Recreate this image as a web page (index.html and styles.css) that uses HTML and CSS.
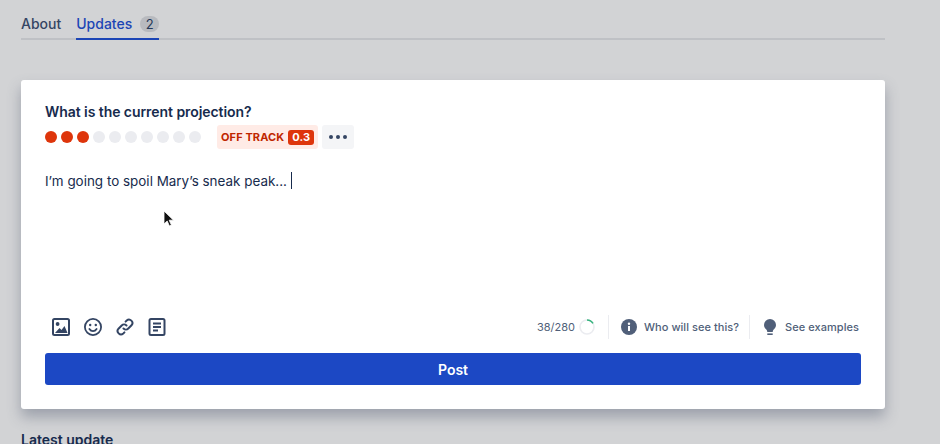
FILE: index.html

```html
<!DOCTYPE html>
<html>
<head>
    <title>Updates</title>
    <link rel="stylesheet" href="styles.css">
</head>
<body>
    <nav class="tabs">
        <a class="tab">About</a>
        <a class="tab active">Updates <span class="count">2</span></a>
    </nav>

    <section class="card">
        <h2 class="question">What is the current projection?</h2>
        <div class="rating">
            <div class="dots">
                <span class="dot on"></span><span class="dot on"></span><span class="dot on"></span>
                <span class="dot"></span><span class="dot"></span><span class="dot"></span>
                <span class="dot"></span><span class="dot"></span><span class="dot"></span><span class="dot"></span>
            </div>
            <div class="status">OFF TRACK <span class="score">0.3</span></div>
            <div class="more"><span></span><span></span><span></span></div>
        </div>

        <p class="editor">I’m going to spoil Mary’s sneak peak... <span class="caret"></span></p>

        <div class="toolbar">
            <div class="tools">
                <svg class="tool" viewBox="0 0 20 20" fill="none" stroke="#344563" stroke-width="2">
                    <rect x="2" y="2" width="16" height="16" rx="1.5"/>
                    <circle cx="6.6" cy="7" r="1.9" fill="#344563" stroke="none"/>
                    <path d="M4 16l4.5-5 2 2 3-4 3 7z" fill="#344563" stroke="none"/>
                </svg>
                <svg class="tool" viewBox="0 0 20 20" fill="none" stroke="#344563" stroke-width="1.8" stroke-linecap="round">
                    <circle cx="10" cy="10" r="8.1"/>
                    <circle cx="7.2" cy="8" r="1.2" fill="#344563" stroke="none"/>
                    <circle cx="12.8" cy="8" r="1.2" fill="#344563" stroke="none"/>
                    <path d="M6.4 12c1 1.6 2.2 2.2 3.6 2.2s2.6-.6 3.6-2.2"/>
                </svg>
                <svg class="tool" viewBox="0 0 20 20" fill="none" stroke="#344563" stroke-width="2" stroke-linecap="round">
                    <path d="M8.5 11.5a3.4 3.4 0 0 0 4.8 0l3.2-3.2a3.4 3.4 0 0 0-4.8-4.8l-1.1 1.1"/>
                    <path d="M11.5 8.5a3.4 3.4 0 0 0-4.8 0l-3.2 3.2a3.4 3.4 0 0 0 4.8 4.8l1.1-1.1"/>
                </svg>
                <svg class="tool" viewBox="0 0 20 20" fill="none" stroke="#344563" stroke-width="2">
                    <rect x="2.5" y="2" width="15" height="16" rx="1.5"/>
                    <path d="M6 6.5h8M6 10h8M6 13.5h5" stroke-width="1.8"/>
                </svg>
            </div>
            <div class="meta">
                <div class="meta-item counter">38/280
                    <svg class="ring" viewBox="0 0 16 16" fill="none" stroke-width="1.6">
                        <circle cx="8" cy="8" r="7" stroke="#ebecf0"/>
                        <path d="M8 1a7 7 0 0 1 6 3.4" stroke="#36b37e"/>
                    </svg>
                </div>
                <div class="meta-item">
                    <svg class="meta-icon" viewBox="0 0 16 16">
                        <circle cx="8" cy="8" r="8" fill="#505f79"/>
                        <rect x="7" y="7" width="2" height="5" fill="#fff"/>
                        <circle cx="8" cy="4.8" r="1.2" fill="#fff"/>
                    </svg>
                    Who will see this?
                </div>
                <div class="meta-item examples">
                    <svg class="meta-icon" viewBox="0 0 16 16" fill="#505f79">
                        <path d="M8 0a6 6 0 0 0-6 6c0 2.2 1.3 3.5 2.3 4.6.6.7.9 1.4 1 2.4h5.400c.1-1 .4-1.7 1-2.400C12.700 9.500 14 8.200 14 6a6 6 0 0 0-6-6z"/>
                        <rect x="5.300" y="14.400" width="5.400" height="1.600"/>
                    </svg>
                    See examples
                </div>
            </div>
        </div>

        <button class="post">Post</button>
    </section>

    <h3 class="latest">Latest update</h3>

    <svg class="pointer" viewBox="0 0 12 18">
        <path d="M1 1v13l3.200-3 2.200 5 2-.9-2.200-4.900h4.300z" fill="#111" stroke="#fff" stroke-width=".8"/>
    </svg>
</body>
</html>
```

FILE: styles.css

```css
html, body {
    height: 444px;
    overflow: hidden;
}

body {
    margin: 0;
    padding: 0 55px 0 21px;
    position: relative;
    background: #d2d3d5;
    color: #172b4d;
    font-family: Inter, "Liberation Sans", sans-serif;
}

.tabs {
    display: flex;
    gap: 15px;
    height: 38px;
    align-items: flex-end;
    border-bottom: 2px solid #bfc1c5;
    margin-bottom: 40px;
}

.tab {
    display: flex;
    align-items: center;
    gap: 8px;
    height: 30px;
    margin-bottom: -2px;
    padding-bottom: 4px;
    box-sizing: border-box;
    font-size: 14px;
    font-weight: 500;
    color: #344563;
}

.tab.active {
    color: #1c45b5;
    border-bottom: 2px solid #1c45b5;
    padding-bottom: 2px;
}

.count {
    width: 19px;
    height: 16px;
    margin-top: 2px;
    border-radius: 8px;
    background: #b8babf;
    color: #253858;
    font-size: 13px;
    font-weight: 400;
    line-height: 16px;
    text-align: center;
}

.card {
    height: 329px;
    box-sizing: border-box;
    padding: 23px 24px 24px;
    display: flex;
    flex-direction: column;
    background: #fff;
    border-radius: 3px;
    box-shadow: 0 8px 14px rgba(90, 100, 120, 0.45);
}

.question {
    margin: 0 0 5px;
    font-size: 14px;
    line-height: 17px;
    font-weight: 600;
    letter-spacing: -0.06px;
    color: #172b4d;
}

.rating {
    display: flex;
    align-items: center;
    height: 24px;
}

.dots {
    display: flex;
    gap: 4px;
    margin-right: 16px;
}

.dot {
    width: 12px;
    height: 12px;
    border-radius: 50%;
    background: #ebecf0;
}

.dot.on {
    background: #de350b;
}

.status {
    display: flex;
    align-items: center;
    gap: 4px;
    height: 24px;
    padding: 0 4px;
    margin-right: 4px;
    border-radius: 3px;
    background: #ffebe6;
    color: #bf2600;
    font-size: 11px;
    font-weight: 700;
    letter-spacing: 0.1px;
}

.score {
    padding: 0 4px;
    line-height: 15px;
    border-radius: 3px;
    background: #de350b;
    color: #fff;
}

.more {
    display: flex;
    align-items: center;
    justify-content: center;
    gap: 3px;
    width: 32px;
    height: 24px;
    border-radius: 3px;
    background: #f4f5f7;
}

.more span {
    width: 4px;
    height: 4px;
    border-radius: 50%;
    background: #344563;
}

.editor {
    flex: 1;
    margin: 22px 0 0;
    font-size: 13.45px;
    line-height: 20px;
    color: #172b4d;
}

.caret {
    display: inline-block;
    width: 1px;
    height: 17px;
    background: #172b4d;
    vertical-align: -3px;
}

.toolbar {
    display: flex;
    justify-content: space-between;
    align-items: center;
    height: 32px;
    margin-bottom: 10px;
}

.tools {
    display: flex;
    gap: 12px;
    padding-left: 6px;
}

.tool {
    width: 20px;
    height: 20px;
}

.meta {
    display: flex;
    align-items: center;
}

.meta-item {
    display: flex;
    align-items: center;
    gap: 7px;
    height: 24px;
    padding: 0 2px 0 12px;
    border-left: 1px solid #ebecf0;
    margin-left: 10px;
    font-size: 11px;
    font-weight: 500;
    letter-spacing: 0.05px;
    color: #505f79;
}

.examples {
    margin-left: 8px;
}

.counter {
    border-left: 0;
    margin: 0;
    padding: 0 3px 0 0;
    font-weight: 400;
    letter-spacing: 0;
    gap: 4px;
}

.ring {
    width: 16px;
    height: 16px;
}

.meta-icon {
    width: 16px;
    height: 16px;
}

.post {
    height: 32px;
    border: 0;
    border-radius: 3px;
    background: #1c48c4;
    color: #fff;
    font-family: inherit;
    font-size: 14px;
    font-weight: 600;
}

.latest {
    margin: 22px 0 0;
    font-size: 14px;
    line-height: 17px;
    font-weight: 600;
    color: #172b4d;
}

.pointer {
    position: absolute;
    left: 163px;
    top: 210px;
    width: 12px;
    height: 18px;
}
```
